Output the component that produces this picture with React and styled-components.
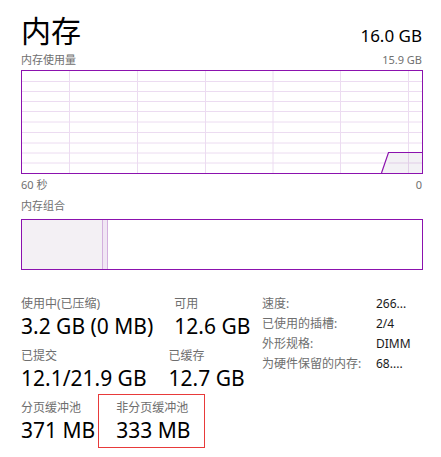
import React from "react";
import styled, { createGlobalStyle } from "styled-components";

const GlobalStyle = createGlobalStyle`
  html, body {
    margin: 0;
    padding: 0;
    background: #ffffff;
  }
  body {
    font-family: "Noto Sans", "Noto Sans CJK SC", sans-serif;
    color: #000;
  }
`;

const Page = styled.div`
  width: 441px;
  height: 457px;
  box-sizing: border-box;
  padding: 11px 19px 0 21px;
  overflow: hidden;
`;

const Header = styled.div`
  display: flex;
  justify-content: space-between;
  align-items: baseline;
  height: 41px;
`;

const Title = styled.div`
  font-size: 30px;
  line-height: 40px;
`;

const Total = styled.div`
  font-size: 17px;
  line-height: 20px;
`;

const Caption = styled.div`
  display: flex;
  justify-content: space-between;
  font-size: 11px;
  line-height: 16px;
  height: 16px;
  color: #707070;
  margin-top: ${(p) => p.$top || 0}px;
`;

const ChartBox = styled.div`
  margin-top: 2px;
  border: 1px solid #8b12ae;
  height: 102px;
  width: 400px;
  svg {
    display: block;
  }
`;

const CompBox = styled.div`
  margin-top: 5px;
  border: 1px solid #8b12ae;
  height: 49px;
  width: 400px;
  display: flex;
`;

const Segment = styled.div`
  width: ${(p) => p.$w}px;
  background: ${(p) => p.$bg};
  border-right: 1px solid #d3b0de;
`;

const Stats = styled.div`
  display: grid;
  grid-template-columns: 241px 1fr;
  align-items: start;
  margin-top: 26px;
`;

const Left = styled.div`
  display: flex;
  flex-direction: column;
  gap: 8px;
`;

const StatRow = styled.div`
  display: flex;
  gap: ${(p) => p.$gap || 21}px;
`;

const Stat = styled.div`
  position: relative;
  ${(p) =>
    p.$marked &&
    `
    &::after {
      content: "";
      position: absolute;
      left: -18px;
      right: -15px;
      top: -6px;
      bottom: -4px;
      border: 1px solid #e83a3a;
    }
  `}
`;

const Label = styled.div`
  font-size: 12px;
  line-height: 16px;
  color: #6e6e6e;
`;

const Value = styled.div`
  font-size: 21px;
  line-height: 28px;
  color: #000;
`;

const Details = styled.div`
  display: grid;
  grid-template-columns: 114px 1fr;
  align-content: start;
  row-gap: 4px;
  font-size: 12px;
  line-height: 16px;
`;

const DLabel = styled.div`
  color: #6e6e6e;
`;

const DValue = styled.div`
  color: #1a1a1a;
`;

function UsageChart() {
  const w = 400;
  const h = 102;
  const vx = [47.5, 115.5, 183.5, 251, 318.5, 386.5];
  const hy = [10.5, 20.5, 30.5, 40.5, 51, 61.5, 72, 82, 92];
  return (
    <svg width={w} height={h} viewBox={`0 0 ${w} ${h}`}>
      {hy.map((y) => (
        <line key={y} x1="0" x2={w} y1={y} y2={y} stroke="#ecdcf1" strokeWidth="1" />
      ))}
      {vx.map((x) => (
        <line key={x} x1={x} x2={x} y1="0" y2={h} stroke="#ecdcf1" strokeWidth="1" />
      ))}
      <polygon points="359.5,102 366.5,81 400,81 400,102" fill="#f1eef3" fillOpacity="0.85" />
      <line x1="386.5" x2="386.5" y1="81" y2={h} stroke="#e2cfe8" strokeWidth="1" />
      <line x1="366.5" x2="400" y1="92" y2="92" stroke="#e2cfe8" strokeWidth="1" />
      <polyline points="359.5,102 366.5,81.5 400,81.5" fill="none" stroke="#8b12ae" strokeWidth="1.2" />
    </svg>
  );
}

const details = [
  ["速度:", "266..."],
  ["已使用的插槽:", "2/4"],
  ["外形规格:", "DIMM"],
  ["为硬件保留的内存:", "68...."],
];

export default function App() {
  return (
    <Page>
      <GlobalStyle />
      <Header>
        <Title>内存</Title>
        <Total>16.0 GB</Total>
      </Header>
      <Caption>
        <span>内存使用量</span>
        <span>15.9 GB</span>
      </Caption>
      <ChartBox>
        <UsageChart />
      </ChartBox>
      <Caption $top={3}>
        <span>60 秒</span>
        <span>0</span>
      </Caption>
      <Caption $top={5}>
        <span>内存组合</span>
      </Caption>
      <CompBox>
        <Segment $w={80} $bg="#f3f0f4" />
        <Segment $w={4} $bg="#f1e7f4" />
      </CompBox>
      <Stats>
        <Left>
          <StatRow>
            <Stat>
              <Label>使用中(已压缩)</Label>
              <Value>3.2 GB (0 MB)</Value>
            </Stat>
            <Stat>
              <Label>可用</Label>
              <Value>12.6 GB</Value>
            </Stat>
          </StatRow>
          <StatRow $gap={22}>
            <Stat>
              <Label>已提交</Label>
              <Value>12.1/21.9 GB</Value>
            </Stat>
            <Stat>
              <Label>已缓存</Label>
              <Value>12.7 GB</Value>
            </Stat>
          </StatRow>
          <StatRow>
            <Stat>
              <Label>分页缓冲池</Label>
              <Value>371 MB</Value>
            </Stat>
            <Stat $marked>
              <Label>非分页缓冲池</Label>
              <Value>333 MB</Value>
            </Stat>
          </StatRow>
        </Left>
        <Details>
          {details.map(([k, v]) => (
            <React.Fragment key={k}>
              <DLabel>{k}</DLabel>
              <DValue>{v}</DValue>
            </React.Fragment>
          ))}
        </Details>
      </Stats>
    </Page>
  );
}
